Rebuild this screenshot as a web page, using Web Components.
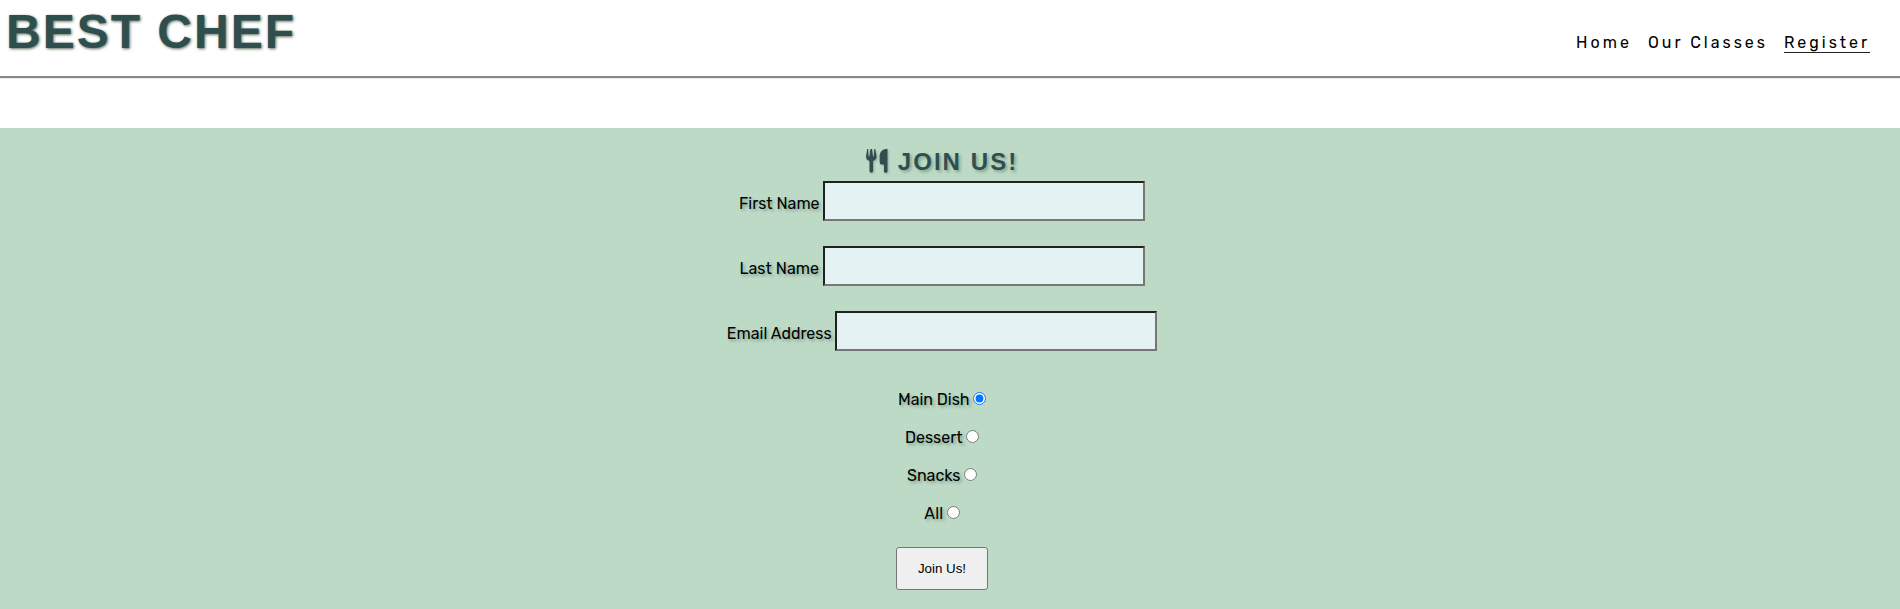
<!DOCTYPE html>
<html lang="en">
<head>
<meta charset="utf-8">
<title>Best Chef</title>
<style>
html{height:100%;overflow:hidden}
body{margin:0;height:100%;overflow:hidden;background:#fff;color:#000;font:16px/20px Rubik,Roboto,sans-serif}
</style>
</head>
<body>
<chef-page></chef-page>
<script>
class Base extends HTMLElement {
  constructor() {
    super();
    this.attachShadow({mode: 'open'}).innerHTML = this.template();
  }
}
/* A line of text that spreads its letters over a given width. */
customElements.define('fit-text', class extends Base {
  template() { return `<style>:host{display:inline-block;white-space:nowrap}span{display:inline-block}</style><span><slot></slot></span>`; }
  connectedCallback() {
    const w = +this.getAttribute('width');
    const s = this.shadowRoot.querySelector('span');
    s.style.letterSpacing = '0px';
    s.style.letterSpacing = (w - s.getBoundingClientRect().width) / this.textContent.length + 'px';
    this.style.width = w + 'px';
  }
});
customElements.define('nav-link', class extends Base {
  template() { return `<style>
    :host{display:block;height:19px;padding-top:1px;border-bottom:1px solid transparent}
    :host([active]){border-color:#222}
    a{display:block}</style><a><slot></slot></a>`; }
});
customElements.define('site-header', class extends Base {
  template() { return `<style>
    :host{display:flex;justify-content:space-between;align-items:flex-start;box-sizing:border-box;height:77px;padding:4px 30px 0 6px;border-bottom:1px solid #888;box-shadow:0 1px 1px #888}
    h1{margin:0;font:bold 48px/55px "Liberation Sans",Arial,sans-serif;color:#2f4f4f;text-shadow:1px 1px 3px #5c6e58}
    nav{display:flex;gap:16px;padding-top:28px}</style>
    <h1><fit-text width="290">BEST CHEF</fit-text></h1>
    <nav><nav-link><fit-text width="56">Home</fit-text></nav-link><nav-link><fit-text width="120">Our Classes</fit-text></nav-link><nav-link active><fit-text width="86">Register</fit-text></nav-link></nav>`; }
});
customElements.define('cutlery-icon', class extends Base {
  template() { return `<style>:host{display:block;width:22px;height:24px;filter:drop-shadow(1px 1px 1px rgba(47,79,79,.3))}svg{display:block}</style>
    <svg width="22" height="24" viewBox="0 0 22 24" fill="#2f4f4f"><path d="M1.2 0H2.2L2.5 7.2H3.4L4.4 0H6L7 7.2H7.9L8.2 0H9.2L10.6 7.6C10.7 9.7 9.4 11.3 7.1 12.1V22.3Q7.1 23.7 5.3 23.7T3.5 22.3V12.1C1.1 11.3-.1 9.7 0 7.6Z"/><path d="M21.5 0V22.4Q21.5 23.7 19.7 23.7T17.9 22.4V15.4H14.8Q13.6 14.8 13.6 11V7C13.8 3 16.5 0 20.5 0Z"/></svg>`; }
});
customElements.define('text-field', class extends Base {
  template() { return `<style>
    :host{display:flex;gap:3.5px;height:40px;margin-bottom:25px}
    label{padding-top:13px;height:20px}
    input{box-sizing:border-box;width:322px;height:40px;margin:0;padding:10px;background:#e4f2f3;border:2px inset #767676;border-radius:0}</style>
    <label for="f"><slot></slot></label><input id="f">`; }
});
customElements.define('radio-option', class extends Base {
  template() { return `<style>
    :host{display:flex;gap:3.5px;height:38px}
    label{padding-top:10px}
    input{width:13px;height:13px;margin:12px 0 0}</style>
    <label for="r"><slot></slot></label><input type="radio" id="r">`; }
  connectedCallback() { this.shadowRoot.querySelector('input').checked = this.hasAttribute('checked'); }
});
customElements.define('join-form', class extends Base {
  template() { return `<style>
    :host{display:block;box-sizing:border-box;height:481px;margin-top:51px;padding:20px 16px 0 0;background:#bcdac6;text-shadow:2px 2px 3px rgba(60,90,75,.42)}
    form{display:flex;flex-direction:column;align-items:center}
    h2{display:flex;gap:10px;height:33px;margin:0;font:bold 24px/28px "Liberation Sans",Arial,sans-serif;color:#2f4f4f}
    h2 cutlery-icon{margin-top:1px}
    .options{display:flex;flex-direction:column;align-items:center;margin-top:4px}
    button{box-sizing:border-box;width:92px;height:43px;margin:15px 0 0;padding:0;font:13.333px "Liberation Sans",Arial,sans-serif;color:#000;background:#efefef;border:1px solid #767676;border-radius:3px}</style>
    <form><h2><cutlery-icon></cutlery-icon><fit-text width="120.5">JOIN US!</fit-text></h2>
    <text-field><fit-text width="80.6">First Name</fit-text></text-field>
    <text-field><fit-text width="79.6">Last Name</fit-text></text-field>
    <text-field><fit-text width="104.8">Email Address</fit-text></text-field>
    <div class="options">
    <radio-option checked><fit-text width="71.5">Main Dish</fit-text></radio-option>
    <radio-option><fit-text width="57.5">Dessert</fit-text></radio-option>
    <radio-option><fit-text width="53.5">Snacks</fit-text></radio-option>
    <radio-option><fit-text width="19">All</fit-text></radio-option></div>
    <button type="button">Join Us!</button></form>`; }
});
customElements.define('chef-page', class extends Base {
  template() { return `<style>:host{display:block}</style><site-header></site-header><join-form></join-form>`; }
});
</script>
</body>
</html>
